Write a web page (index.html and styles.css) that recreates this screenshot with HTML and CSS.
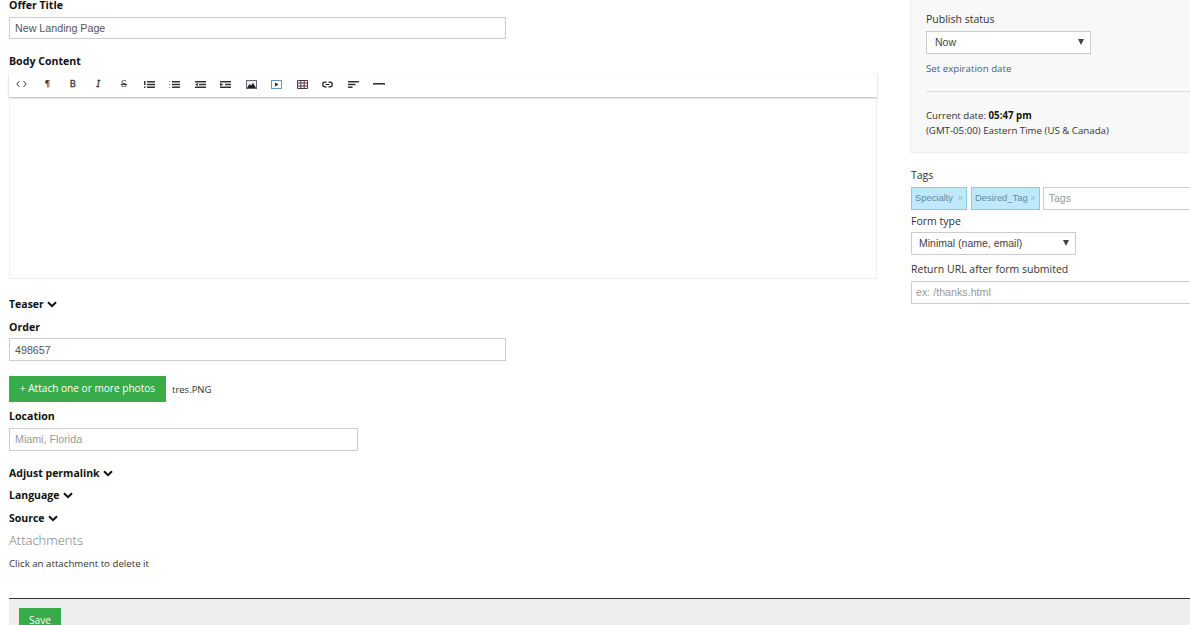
FILE: index.html
```html
<!DOCTYPE html>
<html lang="en">
<head>
    <meta charset="UTF-8">
    <title>New Landing Page</title>
    <link rel="stylesheet" href="styles.css">
</head>
<body>
    <div class="page">
        <div class="columns">
            <div class="main">
                <label class="label label-first">Offer Title</label>
                <input class="field field-wide field-title" type="text" value="New Landing Page">

                <label class="label label-body">Body Content</label>
                <div class="toolbar">
                    <span class="tool"><svg width="11" height="8" viewBox="0 0 11 8"><path d="M3.5 1 L0.8 4 L3.5 7 M7.5 1 L10.2 4 L7.5 7" fill="none" stroke="#333" stroke-width="1"/></svg></span>
                    <span class="tool tool-text tool-bold">¶</span>
                    <span class="tool tool-text tool-b">B</span>
                    <span class="tool tool-text tool-italic">I</span>
                    <span class="tool tool-text tool-strike">S</span>
                    <span class="tool"><svg width="11" height="7" viewBox="0 0 11 7"><path d="M0 0h1.5v4H0zM0 5.5h1.5V7H0zM3 0h8v1.6H3zM3 2.7h8v1.6H3zM3 5.4h8V7H3z" fill="#333"/></svg></span>
                    <span class="tool"><svg width="11" height="7" viewBox="0 0 11 7"><path d="M0 0h1v1H0zM0 3h1v1H0zM0 6h1v1H0z" fill="#888"/><path d="M3 0h8v1.6H3zM3 2.7h8v1.6H3zM3 5.4h8V7H3z" fill="#333"/></svg></span>
                    <span class="tool"><svg width="11" height="7" viewBox="0 0 11 7"><path d="M0 0h11v1.5H0zM4 2.8h7v1.5H4zM0 5.5h11V7H0zM0 3.5 L3 2 V5z" fill="#333"/></svg></span>
                    <span class="tool"><svg width="11" height="7" viewBox="0 0 11 7"><path d="M0 0h11v1.5H0zM5 2.8h6v1.5H5zM0 5.5h11V7H0zM3.5 3.5 L0 2 V5z" fill="#333"/></svg></span>
                    <span class="tool"><svg width="11" height="9" viewBox="0 0 11 9"><rect x="0.5" y="0.5" width="10" height="8" fill="#eee" stroke="#667"/><path d="M1 8 L3.5 4 L5 5.5 L7 3 L10 8z" fill="#222"/></svg></span>
                    <span class="tool"><svg width="11" height="9" viewBox="0 0 11 9"><rect x="0.5" y="0.5" width="10" height="8" fill="#fff" stroke="#5a9cc0"/><path d="M4 2.5 L7.5 4.5 L4 6.5z" fill="#222"/></svg></span>
                    <span class="tool"><svg width="11" height="9" viewBox="0 0 11 9"><path d="M0.5 0.5h10v8h-10zM0.5 3h10M0.5 6h10M3.8 0.5v8M7.2 0.5v8" fill="none" stroke="#534"/></svg></span>
                    <span class="tool"><svg width="11" height="7" viewBox="0 0 11 7"><path d="M4.6 1.2H3a2.3 2.3 0 0 0 0 4.6h1.6M6.4 1.2H8a2.3 2.3 0 0 1 0 4.6H6.4M3.6 3.5h3.8" fill="none" stroke="#222" stroke-width="1.2"/></svg></span>
                    <span class="tool"><svg width="11" height="7" viewBox="0 0 11 7"><path d="M0 0h11v1.5H0zM0 2.8h7.5v1.5H0zM0 5.5h4.5V7H0z" fill="#333"/></svg></span>
                    <span class="tool"><svg width="12" height="2" viewBox="0 0 12 2"><path d="M0 0h12v1.6H0z" fill="#333"/></svg></span>
                </div>
                <div class="editor"></div>

                <div class="toggle toggle-teaser">Teaser <svg class="chevron" width="10" height="7" viewBox="0 0 10 7"><path d="M1 1.2 L5 5.2 L9 1.2" fill="none" stroke="#111" stroke-width="2"/></svg></div>

                <label class="label label-order">Order</label>
                <input class="field field-wide" type="text" value="498657">

                <div class="attach">
                    <a class="btn btn-attach">+ Attach one or more photos</a>
                    <span class="file-name">tres.PNG</span>
                </div>

                <label class="label label-location">Location</label>
                <input class="field field-mid" type="text" placeholder="Miami, Florida">

                <div class="toggle toggle-permalink">Adjust permalink <svg class="chevron" width="10" height="7" viewBox="0 0 10 7"><path d="M1 1.2 L5 5.2 L9 1.2" fill="none" stroke="#111" stroke-width="2"/></svg></div>
                <div class="toggle toggle-language">Language <svg class="chevron" width="10" height="7" viewBox="0 0 10 7"><path d="M1 1.2 L5 5.2 L9 1.2" fill="none" stroke="#111" stroke-width="2"/></svg></div>
                <div class="toggle toggle-source">Source <svg class="chevron" width="10" height="7" viewBox="0 0 10 7"><path d="M1 1.2 L5 5.2 L9 1.2" fill="none" stroke="#111" stroke-width="2"/></svg></div>

                <h4 class="attachments-title">Attachments</h4>
                <p class="attachments-note">Click an attachment to delete it</p>
            </div>

            <div class="side">
                <div class="status-box">
                    <div class="side-label">Publish status</div>
                    <div class="select-wrap select-status">
                        <select class="select select-indent"><option>Now</option></select>
                    </div>
                    <a class="expire-link">Set expiration date</a>
                    <hr class="status-line">
                    <div class="date-line">Current date: <b>05:47 pm</b></div>
                    <div class="date-line">(GMT-05:00) Eastern Time (US &amp; Canada)</div>
                </div>

                <div class="side-label side-label-tags">Tags</div>
                <div class="tags">
                    <span class="tag">Specialty <i class="tag-x">×</i></span>
                    <span class="tag">Desired_Tag <i class="tag-x">×</i></span>
                    <input class="tag-input" type="text" placeholder="Tags">
                </div>

                <div class="side-label side-label-form">Form type</div>
                <div class="select-wrap select-form">
                    <select class="select"><option>Minimal (name, email)</option></select>
                </div>

                <div class="side-label side-label-return">Return URL after form submited</div>
                <input class="field field-url" type="text" placeholder="ex: /thanks.html">
            </div>
        </div>

        <div class="save-bar">
            <a class="btn btn-save">Save</a>
        </div>
    </div>
</body>
</html>
```

FILE: styles.css
```css
html,
body {
    margin: 0;
    height: 625px;
    overflow: hidden;
    background-color: #fff;
}

body {
    font-family: "Open Sans", "Liberation Sans", sans-serif;
    font-size: 10px;
    color: #222;
}

.page {
    padding-left: 9px;
}

.columns {
    display: flex;
    height: 598px;
}

.main {
    width: 868px;
    flex: none;
}

.side {
    width: 300px;
    flex: none;
    margin-left: 34px;
}

.label {
    display: block;
    font-size: 10.6px;
    font-weight: 700;
    line-height: 14px;
    color: #111;
}

.label-first {
    line-height: 10px;
    margin-bottom: 7px;
}

.label-body {
    margin-top: 15px;
    margin-bottom: 5px;
}

.label-order {
    margin-top: 9px;
    margin-bottom: 4px;
}

.label-location {
    margin-top: 7px;
    margin-bottom: 5px;
}

.field {
    display: block;
    box-sizing: border-box;
    height: 23px;
    padding: 0 5px;
    border: 1px solid #ccc;
    font-family: "Liberation Sans", Arial, sans-serif;
    font-size: 10.7px;
    color: #555;
    outline: none;
}

.field::placeholder,
.tag-input::placeholder {
    color: #999;
    opacity: 1;
}

.field-wide {
    width: 497px;
}

.field-title {
    height: 22px;
}

.field-mid {
    width: 349px;
    padding-bottom: 2px;
}

.field-url {
    width: 300px;
    padding: 0 4px 2px;
}

.toolbar {
    display: flex;
    align-items: center;
    box-sizing: border-box;
    height: 24px;
    padding-bottom: 2px;
    box-shadow: 0 1px 2px rgba(0, 0, 0, 0.3);
    position: relative;
    background-color: #fff;
}

.tool {
    display: flex;
    align-items: center;
    justify-content: center;
    width: 25.5px;
    height: 22px;
    flex: none;
}

.tool-text {
    font-family: "DejaVu Serif", serif;
    font-size: 9px;
    color: #333;
}

.tool-bold {
    font-weight: 700;
}

.tool-b {
    font-family: "DejaVu Sans", sans-serif;
    font-weight: 400;
    -webkit-text-stroke: 0.3px #333;
}

.tool-italic {
    font-style: italic;
    -webkit-text-stroke: 0.3px #333;
}

.tool-strike {
    text-decoration: line-through;
}

.editor {
    box-sizing: border-box;
    height: 182px;
    border: 1px solid #eee;
    border-top: none;
}

.toggle {
    font-size: 10.5px;
    font-weight: 700;
    line-height: 14px;
    color: #111;
}

.chevron {
    margin-left: 0.5px;
}

.toggle-teaser {
    margin-top: 18px;
}

.toggle-permalink {
    margin-top: 15px;
}

.toggle-language {
    margin-top: 8px;
}

.toggle-source {
    margin-top: 9px;
}

.attach {
    display: flex;
    align-items: center;
    margin-top: 15px;
}

.btn {
    display: block;
    background-color: #38ab4a;
    color: #fff;
    font-size: 10.1px;
}

.btn-attach {
    width: 157px;
    height: 26px;
    line-height: 25px;
    text-align: center;
}

.file-name {
    margin-left: 6px;
    font-size: 9.5px;
    color: #333;
}

.attachments-title {
    margin: 6px 0 0;
    font-size: 13px;
    font-weight: 300;
    line-height: 18px;
    color: #777;
}

.attachments-note {
    margin: 8px 0 0;
    font-size: 9.7px;
    line-height: 13px;
    color: #333;
}

.status-box {
    box-sizing: border-box;
    height: 153px;
    padding: 12px 0 0 15px;
    background-color: #f8f8f8;
    border-left: 1px solid #eee;
    border-bottom: 1px solid #eee;
    margin-left: -1px;
}

.side-label {
    font-size: 10.5px;
    line-height: 14px;
    color: #333;
}

.side-label-tags {
    margin-top: 15px;
}

.side-label-form {
    margin-top: 4px;
}

.side-label-return {
    margin-top: 7px;
    margin-bottom: 5px;
}

.select-wrap {
    position: relative;
    box-sizing: border-box;
    height: 23px;
    margin-top: 5px;
}

.select-status {
    width: 165px;
}

.select-form {
    width: 165px;
    margin-top: 4px;
}

.select-wrap::after {
    content: "";
    position: absolute;
    right: 7px;
    top: 8px;
    border-left: 3px solid transparent;
    border-right: 3px solid transparent;
    border-top: 6px solid #444;
}

.select {
    appearance: none;
    box-sizing: border-box;
    display: block;
    width: 100%;
    height: 23px;
    padding: 0 7px 2px;
    border: 1px solid #ccc;
    border-radius: 0;
    background-color: #fff;
    font-family: "Liberation Sans", Arial, sans-serif;
    font-size: 10.5px;
    color: #444;
}

.select-indent {
    padding-left: 8px;
}

.expire-link {
    display: block;
    margin-top: 8px;
    font-size: 9.7px;
    line-height: 13px;
    color: #4a5f7a;
}

.status-line {
    height: 1px;
    margin: 16px 0 0;
    border: none;
    background-color: #ddd;
}

.date-line {
    font-size: 9.7px;
    line-height: 15px;
    color: #333;
}

.status-line + .date-line {
    margin-top: 16px;
}

.date-line b {
    color: #111;
}

.tags {
    display: flex;
    height: 23px;
    margin-top: 5px;
    font-family: "Liberation Sans", Arial, sans-serif;
}

.tag {
    display: flex;
    justify-content: space-between;
    flex: none;
    box-sizing: border-box;
    min-width: 56px;
    height: 23px;
    padding: 0 3px;
    margin-right: 4px;
    background-color: #bfe9fb;
    border: 1px solid #7fcdee;
    font-size: 9.4px;
    line-height: 20px;
    color: #5e8ba5;
    white-space: pre;
}

.tag-x {
    font-style: normal;
    color: #9bb;
}

.tag-input {
    box-sizing: border-box;
    width: 200px;
    height: 23px;
    margin-left: -1px;
    padding: 0 5px 2px;
    border: 1px solid #ccc;
    font-family: "Liberation Sans", Arial, sans-serif;
    font-size: 10.5px;
    outline: none;
}

.save-bar {
    height: 27px;
    padding: 9px 0 0 10px;
    background-color: #eee;
    border-top: 1px solid #333;
}

.btn-save {
    width: 42px;
    height: 30px;
    line-height: 25px;
    text-align: center;
}
```
